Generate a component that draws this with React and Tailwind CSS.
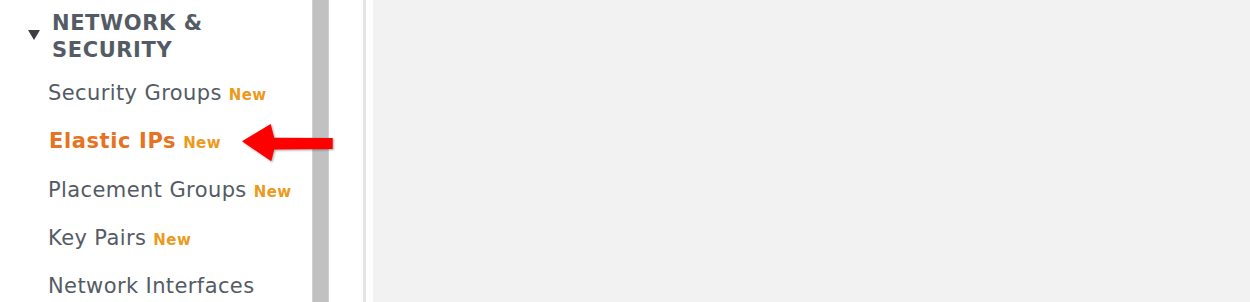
export default function App() {
  const font = { fontFamily: '"DejaVu Sans", Verdana, sans-serif' };
  const items = [
    { label: "Security Groups", isNew: true },
    { label: "Elastic IPs", isNew: true, active: true },
    { label: "Placement Groups", isNew: true },
    { label: "Key Pairs", isNew: true },
    { label: "Network Interfaces", isNew: false },
  ];
  return (
    <div className="relative flex h-[302px] w-[1250px] overflow-hidden bg-white" style={font}>
      <div className="w-[312px] shrink-0 pt-[10px]">
        <div className="flex items-start">
          <svg className="ml-[28px] mt-[20px] shrink-0" width="12" height="10" viewBox="0 0 12 10">
            <polygon points="0,0 12,0 6,10" fill="#3a3d42" />
          </svg>
          <div className="ml-[12px] text-[21px] font-bold leading-[27px] tracking-[0.6px] text-[#545b64]">
            <div>NETWORK &amp;</div>
            <div>SECURITY</div>
          </div>
        </div>
        <ul className="mt-[5px]">
          {items.map((it) => (
            <li
              key={it.label}
              className={
                it.active
                  ? "h-[48.25px] whitespace-nowrap pl-[49px] text-[21px] font-bold leading-[48.25px] tracking-[0.6px] text-[#e5731f]"
                  : "h-[48.25px] whitespace-nowrap pl-[48px] text-[21px] leading-[48.25px] tracking-[0.4px] text-[#545b64]"
              }
            >
              <span>{it.label}</span>
              {it.isNew && (
                <span className="ml-[7px] text-[15px] font-bold leading-none tracking-[0.4px] text-[#ec9a1c]">New</span>
              )}
            </li>
          ))}
        </ul>
      </div>
      <div className="w-[17px] shrink-0 border-x border-[#d0d0d0] bg-[#c1c1c1]" />
      <div className="w-[34px] shrink-0 bg-white" />
      <div className="w-[3px] shrink-0 bg-[#e4e4e4]" />
      <div className="w-[7px] shrink-0 bg-white" />
      <div className="flex-1 bg-[#f2f2f2]" />
      <svg
        className="absolute left-[240px] top-[120px]"
        width="96"
        height="44"
        viewBox="0 0 96 44"
        style={{ filter: "drop-shadow(1px 1px 1px rgba(0,0,0,0.35))" }}
      >
        <polygon
          points="2,21.3 30.7,4 34.2,17.8 92.7,18 92.7,29 34.2,29.4 31.3,41.3"
          fill="#ff0000"
        />
      </svg>
    </div>
  );
}
